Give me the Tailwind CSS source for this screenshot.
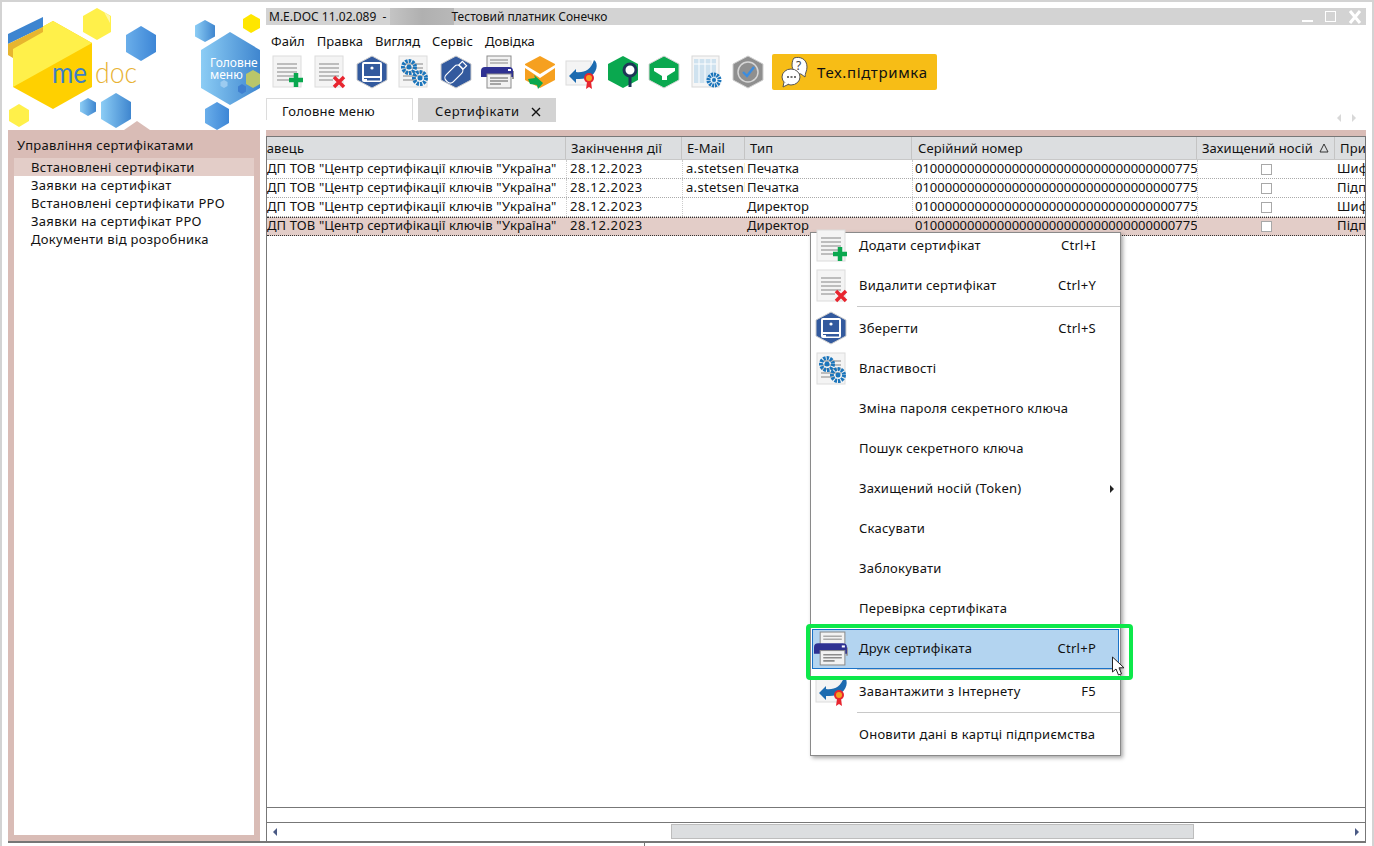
<!DOCTYPE html>
<html lang="uk"><head><meta charset="utf-8">
<script src="https://cdn.jsdelivr.net/npm/@tailwindcss/browser@4"></script>
<title>M.E.DOC</title></head>
<body class="m-0 bg-white">
<svg class="absolute w-0 h-0">
<defs>
<linearGradient id="bl" x1="0" x2="1"><stop offset="0" stop-color="#8ccdf5"/><stop offset="1" stop-color="#3f86cf"/></linearGradient>
<linearGradient id="bl2" x1="0" x2="1"><stop offset="0" stop-color="#6aaeea"/><stop offset="1" stop-color="#3d86d6"/></linearGradient>
<symbol id="doc" viewBox="0 0 34 34"><rect x="2" y="1" width="28" height="31" fill="#f4f4f4" stroke="#dcdcdc"/><path d="M6 9h20M6 13h20M6 17h20M6 21h20M6 25h14" stroke="#bdbdbd" stroke-width="2"/></symbol>
<symbol id="i-add" viewBox="0 0 34 34"><use href="#doc"/><path d="M18 25h14M25 18v14" stroke="#0aa84f" stroke-width="4.5"/></symbol>
<symbol id="i-del" viewBox="0 0 34 34"><use href="#doc"/><path d="M21 22l10 10M31 22l-10 10" stroke="#e8252f" stroke-width="3.5"/></symbol>
<symbol id="i-save" viewBox="0 0 34 34"><path d="M17 1l15 8v16l-15 8-15-8V9z" fill="#335a9e" stroke="#cfcfcf"/><rect x="7" y="7" width="20" height="20" rx="2" fill="#fff"/><rect x="9" y="9" width="16" height="12" fill="#335a9e"/><circle cx="17" cy="13" r="1.600" fill="#fff"/><path d="M9 23h16v2.500H12V24H9z" fill="#335a9e"/></symbol>
<symbol id="i-gear" viewBox="0 0 34 34"><use href="#doc"/><circle cx="12" cy="12" r="6" fill="none" stroke="#1b75bb" stroke-width="4" stroke-dasharray="2.4 1"/><circle cx="12" cy="12" r="2.500" fill="#1b75bb"/><circle cx="23" cy="23" r="6" fill="none" stroke="#1b75bb" stroke-width="4" stroke-dasharray="2.4 1"/><circle cx="23" cy="23" r="2.500" fill="#1b75bb"/></symbol>
<symbol id="i-usb" viewBox="0 0 34 34"><path d="M17 1l15 8v16l-15 8-15-8V9z" fill="#335a9e" stroke="#cfcfcf"/><g transform="rotate(-45 17 17)"><rect x="4" y="12" width="20" height="10" rx="4" fill="none" stroke="#fff" stroke-width="1.2"/><rect x="24" y="14" width="5" height="6" fill="none" stroke="#fff" stroke-width="1.2"/></g></symbol>
<symbol id="i-print" viewBox="0 0 34 34"><rect x="31" y="16" width="2" height="8" fill="#9a9a9a"/><rect x="6" y="1" width="24" height="14" fill="#f2f2f2" stroke="#8c8c8c"/><path d="M9 5h18M9 8h18" stroke="#aaa" stroke-width="1.500"/><path d="M0 16a4 4 0 014-4h24a4 4 0 014 4v6H0z" fill="#2e3192"/><rect x="6" y="19" width="24" height="14" fill="#f2f2f2" stroke="#8c8c8c"/><path d="M9 23h18M9 26h18M9 29h11" stroke="#8c8c8c" stroke-width="1.500"/><rect x="27" y="14" width="3" height="2" fill="#fff"/></symbol>
<symbol id="i-mail" viewBox="0 0 34 34"><path d="M17 1l15 8v16l-15 8-15-8V9z" fill="#f6a01f"/><path d="M2 13l15 10 15-10v-3L17 19 2 10z" fill="#fff"/><path d="M5 24l7-1-1-3 9 8-5 6-1-4-7-1z" fill="#0aa84f"/></symbol>
<symbol id="i-net" viewBox="0 0 34 34"><rect x="1" y="6" width="25" height="24" fill="#f4f4f4" stroke="#dcdcdc"/><path d="M4 21l7-7v3c8 1 15-2 18-12 5 3 3 14-5 17-4 2-9 2-13 2v4z" fill="#1c6bb0"/><path d="M22 27l-1 7 3-2 3 2-1-7z" fill="#e8252f"/><circle cx="24" cy="23" r="5" fill="#e8252f"/><circle cx="24" cy="23" r="3" fill="#f6a01f"/></symbol>
<symbol id="i-find" viewBox="0 0 34 34"><path d="M16 1l15 8v16l-15 8-15-8V9z" fill="#0aa84f"/><circle cx="23" cy="15" r="6" fill="#fff" stroke="#1d3557" stroke-width="3"/><path d="M23 21v11" stroke="#1d3557" stroke-width="3"/></symbol>
<symbol id="i-filter" viewBox="0 0 34 34"><path d="M16 1l15 8v16l-15 8-15-8V9z" fill="#0aa84f" stroke="#d8d8d8"/><path d="M6 13h21v3l-8 5v4l-5 0v-4l-8-5z" fill="#fff"/></symbol>
<symbol id="i-table" viewBox="0 0 34 34"><rect x="3" y="1" width="27" height="31" fill="#f6f6f6" stroke="#d8d8d8"/><rect x="5" y="4" width="22" height="24" fill="#cfe2ef"/><path d="M5 9h22M10 4v24M16 4v24M22 4v24" stroke="#fff"/><circle cx="25" cy="25" r="5.500" fill="none" stroke="#1b75bb" stroke-width="4" stroke-dasharray="2 .8"/><circle cx="25" cy="25" r="2" fill="#1b75bb"/></symbol>
<symbol id="i-check" viewBox="0 0 34 34"><path d="M17 1l15 8v16l-15 8-15-8V9z" fill="#8f8f8f" stroke="#d0d0d0"/><circle cx="17" cy="17" r="10" fill="none" stroke="#d6d6d6" stroke-width="1.500"/><path d="M12 17l4 4 7-9" fill="none" stroke="#3b8de0" stroke-width="2.400"/></symbol>
</defs>
</svg>

<div class="relative w-[1374px] h-[846px] overflow-hidden bg-white flex flex-col text-[13px] text-[#111] font-['Noto_Sans',sans-serif] border-t-2 border-x-2 border-[#d3d3d3] box-border">
 <div class="flex-1 min-h-0 flex">
  <!-- left column -->
  <div class="w-[264px] shrink-0 flex flex-col">
    <svg class="h-[128px] w-[264px] shrink-0" viewBox="0 0 264 128">
      <g transform="translate(-2 -2)">
      <path d="M97 8l14 8v16l-14 8-14-8V16z" fill="#fff04a"/>
      <path d="M104 12l6 4v7z" fill="#fff7a8"/>
      <path d="M141 26l15 9v17l-15 9-15-9V35z" fill="url(#bl2)"/>
      <path d="M53 21l39 22v44l-39 22-40-22V43z" fill="#ffd000"/>
      <path d="M53 21l39 22L13 87V43z" fill="#fff04a"/>
      <path d="M8 34l35-17v10L8 44z" fill="#3d85d0"/>
      <path d="M8 44l35-17v5L13 49v9l-5-3z" fill="#e7b52f"/>
      <text x="52" y="83" font-family="Lato,sans-serif" font-size="29" fill="#3e80c5" textLength="35" lengthAdjust="spacingAndGlyphs">me</text>
      <text x="95" y="83" font-family="Lato,sans-serif" font-weight="300" font-size="29" fill="#e8b233" textLength="42" lengthAdjust="spacingAndGlyphs">doc</text>
      <path d="M19 104l10 6v11l-10 6-10-6v-11z" fill="#fff04a"/>
      <path d="M88 98l8 4.500v9l-8 4.500-8-4.500v-9z" fill="url(#bl)"/>
      <path d="M116 93l15 9v17l-15 9-15-9v-17z" fill="url(#bl)"/>
      <path d="M205 20l10 5.500v11l-10 5.500-10-5.500v-11z" fill="url(#bl)"/>
      <path d="M251 14l9 5v9l-9 5-8-5v-9z" fill="#ffe600"/>
      <path d="M230 32l30 18v38l-30 17-29-17V50z" fill="url(#bl)"/>
      <path d="M253 70l7 4v10l-7 4-7-4V74z" fill="#b9c66a"/>
      <path d="M242 84l4 2.500v5l-4 2.500-4-2.500v-5z" fill="#3f7fd0"/>
      <path d="M224 80l3.500 2v4l-3.500 2-3.500-2v-4z" fill="#9ccbf0"/>
      <text x="210" y="67" font-size="12" fill="#fff">Головне</text>
      <text x="210" y="79" font-size="12" fill="#fff">меню</text>
      <path d="M217 102l12 7v14l-12 7-12-7v-14z" fill="url(#bl2)"/>
      </g>
    </svg>
    <div class="relative ml-[6px] w-[252px] flex-1 bg-[#d9bcb6] flex flex-col px-[6px] pb-[6px]">
      <div class="absolute -top-[9px] left-[116px] w-0 h-0 border-x-[13px] border-x-transparent border-b-[9px] border-b-[#d9bcb6]"></div>
      <div class="h-[28px] flex items-center pl-[3px] pt-[3px] tracking-[.3px]">Управління сертифікатами</div>
      <ul class="flex-1 bg-white tracking-[.3px]">
        <li class="h-[18px] pl-[17px] pt-[1px] flex items-center bg-[#e3cdc8]">Встановлені сертифікати</li>
        <li class="h-[18px] pl-[17px] pt-[1px] flex items-center">Заявки на сертифікат</li>
        <li class="h-[18px] pl-[17px] pt-[1px] flex items-center">Встановлені сертифікати РРО</li>
        <li class="h-[18px] pl-[17px] pt-[1px] flex items-center">Заявки на сертифікат РРО</li>
        <li class="h-[18px] pl-[17px] pt-[1px] flex items-center">Документи від розробника</li>
      </ul>
    </div>
  </div>
  <!-- right column -->
  <div class="w-[1100px] shrink-0 pt-[6px] flex flex-col">
    <div class="h-[17px] bg-[#d3d3d3] flex items-center pl-[3px] pr-[3px] text-[12px]">
      <span>M.E.DOC 11.02.089&nbsp; -</span>
      <span class="w-[64px] h-[17px] ml-[4px] -mr-[3px] bg-gradient-to-r from-[#c4c4c4] via-[#b0b0b0] to-[#b8b8b8]"></span>
      <span>Тестовий платник Сонечко</span>
      <span class="ml-auto flex items-center gap-[12px] pr-[1px]">
        <span class="w-[11px] h-[2px] mt-[9px] bg-white"></span>
        <span class="w-[11px] h-[11px] border border-white"></span>
        <svg class="w-[14px] h-[14px]" viewBox="0 0 14 14"><path d="M2 1l10 12M12 1L2 13" stroke="#fff" stroke-width="3"/></svg>
      </span>
    </div>
    <nav class="h-[29px] flex items-center gap-[12px] pl-[5px] pt-[4px] tracking-[.05px]">
      <span>Файл</span><span>Правка</span><span>Вигляд</span><span>Сервіс</span><span>Довідка</span>
    </nav>
    <div class="h-[36px] flex items-center gap-[8px] pl-[5px]">
      <svg class="w-[34px] h-[34px]"><use href="#i-add"/></svg>
      <svg class="w-[34px] h-[34px]"><use href="#i-del"/></svg>
      <svg class="w-[34px] h-[34px]"><use href="#i-save"/></svg>
      <svg class="w-[34px] h-[34px]"><use href="#i-gear"/></svg>
      <svg class="w-[34px] h-[34px]"><use href="#i-usb"/></svg>
      <svg class="w-[34px] h-[34px]"><use href="#i-print"/></svg>
      <svg class="w-[34px] h-[34px]"><use href="#i-mail"/></svg>
      <svg class="w-[34px] h-[34px]"><use href="#i-net"/></svg>
      <svg class="w-[34px] h-[34px]"><use href="#i-find"/></svg>
      <svg class="w-[34px] h-[34px] -mx-[1px]"><use href="#i-filter"/></svg>
      <svg class="w-[34px] h-[34px]"><use href="#i-table"/></svg>
      <svg class="w-[34px] h-[34px]"><use href="#i-check"/></svg>
      <div class="w-[165px] h-[36px] -ml-[1px] bg-[#f7bd16] rounded-[2px] flex items-center pl-[8px] gap-[7px] text-[15px] tracking-[.65px]">
        <svg class="w-[30px] h-[32px]" viewBox="0 0 30 32"><path d="M14 2c6-2 13 1 13 9 0 4-2 6-2 10l-4-3c-5 0-9-4-9-9 0-3 1-6 2-7z" fill="#fff" stroke="#555"/><text x="16" y="14" font-size="12" fill="#444">?</text><ellipse cx="11" cy="21" rx="9" ry="8" fill="#fff" stroke="#555"/><path d="M4 26l-1 5 6-3" fill="#fff" stroke="#555"/><path d="M7 21h2M10.500 21h2M14 21h2" stroke="#444" stroke-width="1.500"/></svg>
        <span>Тех.підтримка</span>
      </div>
    </div>
    <div class="mt-[8px] h-[26px] relative flex gap-[5px]">
      <div class="w-[147px] h-[22px] bg-white border border-b-0 border-[#dcdcdc] flex items-center pl-[15px] pt-[4px] tracking-[.2px]">Головне меню</div>
      <div class="w-[138px] h-[24px] bg-[#d3d3d3] flex items-center pl-[17px] pt-[4px] gap-[11px] tracking-[.6px]">Сертифікати
        <svg class="w-[10px] h-[10px]" viewBox="0 0 10 10"><path d="M1 1l8 8M9 1L1 9" stroke="#111" stroke-width="1.400"/></svg>
      </div>
      <div class="absolute left-0 top-[22px] w-[1066px] h-[4px] bg-[#e6e6e6] -z-10"></div>
      <div class="absolute left-[1071px] top-[16px] flex gap-[11px]">
        <span class="border-y-[4px] border-y-transparent border-r-[4px] border-r-[#d8d8d8]"></span>
        <span class="border-y-[4px] border-y-transparent border-l-[4px] border-l-[#d8d8d8]"></span>
      </div>
    </div>
    <div class="mt-[6px] h-[6px] bg-[#d9bcb6]"></div>
    <!-- table panel -->
    <div class="flex-1 flex flex-col border-l border-r border-t border-[#777] tracking-[.12px] leading-[16px]">
      <div class="grid grid-cols-[299px_116px_63px_167px_285px_138px_30px] h-[23px] bg-[#dcdee0] border-b border-[#c8c8c8]">
        <div class="overflow-hidden flex items-center whitespace-nowrap border-r border-[#c4c4c4]"><span class="-ml-[25px]">Видавець</span></div>
        <div class="overflow-hidden flex items-center whitespace-nowrap border-r border-[#c4c4c4] pl-[5px]">Закінчення дії</div>
        <div class="overflow-hidden flex items-center whitespace-nowrap border-r border-[#c4c4c4] pl-[5px]">E-Mail</div>
        <div class="overflow-hidden flex items-center whitespace-nowrap border-r border-[#c4c4c4] pl-[5px]">Тип</div>
        <div class="overflow-hidden flex items-center whitespace-nowrap border-r border-[#c4c4c4] pl-[6px]">Серійний номер</div>
        <div class="overflow-hidden flex items-center whitespace-nowrap border-r border-[#c4c4c4] pl-[5px]">Захищений носій<svg class="w-[10px] h-[10px] ml-[6px]" viewBox="0 0 10 10"><path d="M5 1l4 8H1z" fill="none" stroke="#333"/></svg></div>
        <div class="overflow-hidden flex items-center whitespace-nowrap pl-[5px]">Призначення</div>
      </div>
      <div class="grid grid-cols-[299px_116px_63px_167px_285px_138px_30px] h-[19px] border-b border-dotted border-[#aaa]">
        <div class="overflow-hidden whitespace-nowrap">ДП ТОВ "Центр сертифікації ключів "Україна"</div><div class="overflow-hidden whitespace-nowrap pl-[3px] border-l border-dotted border-[#ccc] tracking-[.65px]">28.12.2023</div><div class="overflow-hidden whitespace-nowrap pl-[3px] border-l border-dotted border-[#ccc] tracking-[.3px]">a.stetsenko</div><div class="overflow-hidden whitespace-nowrap pl-[2px]">Печатка</div><div class="overflow-hidden whitespace-nowrap pl-[2px] border-l border-dotted border-[#ccc] tracking-normal">010000000000000000000000000000000007750</div><div class="flex items-center justify-center border-l border-dotted border-[#ccc]"><span class="w-[11px] h-[11px] border border-[#a8a8a8]"></span></div><div class="overflow-hidden whitespace-nowrap pl-[2px]">Шифрування</div>
      </div>
      <div class="grid grid-cols-[299px_116px_63px_167px_285px_138px_30px] h-[19px] border-b border-dotted border-[#aaa]">
        <div class="overflow-hidden whitespace-nowrap">ДП ТОВ "Центр сертифікації ключів "Україна"</div><div class="overflow-hidden whitespace-nowrap pl-[3px] border-l border-dotted border-[#ccc] tracking-[.65px]">28.12.2023</div><div class="overflow-hidden whitespace-nowrap pl-[3px] border-l border-dotted border-[#ccc] tracking-[.3px]">a.stetsenko</div><div class="overflow-hidden whitespace-nowrap pl-[2px]">Печатка</div><div class="overflow-hidden whitespace-nowrap pl-[2px] border-l border-dotted border-[#ccc] tracking-normal">010000000000000000000000000000000007750</div><div class="flex items-center justify-center border-l border-dotted border-[#ccc]"><span class="w-[11px] h-[11px] border border-[#a8a8a8]"></span></div><div class="overflow-hidden whitespace-nowrap pl-[2px]">Підпис</div>
      </div>
      <div class="grid grid-cols-[299px_116px_63px_167px_285px_138px_30px] h-[19px] border-b border-dotted border-[#aaa]">
        <div class="overflow-hidden whitespace-nowrap">ДП ТОВ "Центр сертифікації ключів "Україна"</div><div class="overflow-hidden whitespace-nowrap pl-[3px] border-l border-dotted border-[#ccc] tracking-[.65px]">28.12.2023</div><div class="border-l border-dotted border-[#ccc]"></div><div class="overflow-hidden whitespace-nowrap pl-[2px]">Директор</div><div class="overflow-hidden whitespace-nowrap pl-[2px] border-l border-dotted border-[#ccc] tracking-normal">010000000000000000000000000000000007750</div><div class="flex items-center justify-center border-l border-dotted border-[#ccc]"><span class="w-[11px] h-[11px] border border-[#a8a8a8]"></span></div><div class="overflow-hidden whitespace-nowrap pl-[2px]">Шифрування</div>
      </div>
      <div class="grid grid-cols-[299px_116px_63px_167px_285px_138px_30px] h-[19px] leading-[15px] bg-[#e3cdc8] border-y border-dotted border-[#333]">
        <div class="overflow-hidden whitespace-nowrap">ДП ТОВ "Центр сертифікації ключів "Україна"</div><div class="overflow-hidden whitespace-nowrap pl-[4px] tracking-[.65px]">28.12.2023</div><div></div><div class="overflow-hidden whitespace-nowrap pl-[2px]">Директор</div><div class="overflow-hidden whitespace-nowrap pl-[3px] tracking-normal">010000000000000000000000000000000007750</div><div class="flex items-center justify-center"><span class="w-[11px] h-[11px] border border-[#a8a8a8] bg-white"></span></div><div class="overflow-hidden whitespace-nowrap pl-[2px]">Підпис</div>
      </div>
      <div class="flex-1"></div>
      <div class="h-[15px] border-t border-[#777]"></div>
      <div class="h-[19px] border-t border-[#777] bg-white flex items-center relative">
        <span class="absolute left-[6px] border-y-[4px] border-y-transparent border-r-[4px] border-r-[#4a5a85]"></span>
        <div class="absolute left-[404px] w-[523px] top-[1px] h-[15px] bg-[#dcdee0] border border-[#bdbdbd]"></div>
        <span class="absolute right-[6px] border-y-[4px] border-y-transparent border-l-[4px] border-l-[#4a5a85]"></span>
      </div>
    </div>
  </div>
 </div>
 <!-- bottom bar -->
 <div class="h-[5px] shrink-0 ml-[6px] mr-[6px] border-t-2 border-[#777] flex">
   <span class="ml-[636px] w-[1px] bg-[#777]"></span>
 </div>

  <!-- context menu -->
  <div class="absolute left-[808px] top-[230px] w-[311px] h-[524px] bg-white border border-[#8a8a8a] shadow-[2px_2px_4px_rgba(0,0,0,.35)] tracking-[.25px]">
    <div class="h-[33px] flex items-center pb-[7px] relative"><svg class="absolute left-[4px] top-[-4px] w-[34px] h-[34px]"><use href="#i-add"/></svg><span class="pl-[48px]">Додати сертифікат</span><span class="ml-auto mr-[24px]">Ctrl+I</span></div>
    <div class="h-[40px] flex items-center relative"><svg class="absolute left-[4px] top-[3px] w-[34px] h-[34px]"><use href="#i-del"/></svg><span class="pl-[48px]">Видалити сертифікат</span><span class="ml-auto mr-[24px]">Ctrl+Y</span></div>
    <div class="ml-[46px] h-px bg-[#c8c8c8]"></div>
    <div class="h-[42px] flex items-center pt-[2px] relative"><svg class="absolute left-[3px] top-[4px] w-[34px] h-[34px]"><use href="#i-save"/></svg><span class="pl-[48px]">Зберегти</span><span class="ml-auto mr-[24px]">Ctrl+S</span></div>
    <div class="h-[40px] flex items-center relative"><svg class="absolute left-[4px] top-[3px] w-[34px] h-[34px]"><use href="#i-gear"/></svg><span class="pl-[48px]">Властивості</span></div>
    <div class="h-[40px] flex items-center"><span class="pl-[48px]">Зміна пароля секретного ключа</span></div>
    <div class="h-[40px] flex items-center"><span class="pl-[48px]">Пошук секретного ключа</span></div>
    <div class="h-[40px] flex items-center"><span class="pl-[48px]">Захищений носій (Token)</span><span class="ml-auto mr-[6px] border-y-[4px] border-y-transparent border-l-[4px] border-l-[#222]"></span></div>
    <div class="h-[40px] flex items-center"><span class="pl-[48px]">Скасувати</span></div>
    <div class="h-[40px] flex items-center"><span class="pl-[48px]">Заблокувати</span></div>
    <div class="h-[40px] flex items-center"><span class="pl-[48px]">Перевірка сертифіката</span></div>
    <div class="h-[40px] ml-[1px] mr-[1px] flex items-center relative bg-[#b3d4f0] border border-[#1a72c8]"><svg class="absolute left-[1px] top-[1px] w-[35px] h-[35px]"><use href="#i-print"/></svg><span class="pl-[46px]">Друк сертифіката</span><span class="ml-auto mr-[22px]">Ctrl+P</span></div>
    <div class="ml-[46px] h-px bg-[#c8c8c8]"></div>
    <div class="h-[42px] flex items-center pt-[2px] relative"><svg class="absolute left-[4px] top-[2px] w-[34px] h-[34px]"><use href="#i-net"/></svg><span class="pl-[48px]">Завантажити з Інтернету</span><span class="ml-auto mr-[24px]">F5</span></div>
    <div class="ml-[46px] h-px bg-[#c8c8c8]"></div>
    <div class="h-[42px] flex items-center pt-[2px]"><span class="pl-[48px]">Оновити дані в картці підприємства</span></div>
  </div>
  <div class="absolute left-[804px] top-[622px] w-[327px] h-[56px] border-[4px] border-[#0de84a] rounded-[4px]"></div>
  <svg class="absolute left-[1109px] top-[654px] w-[16px] h-[22px]" viewBox="0 0 16 22"><path d="M1.500 1v15l3.500-3 2.500 6 3-1.200-2.500-6h5z" fill="#fff" stroke="#222"/></svg>
</div>
</body></html>
